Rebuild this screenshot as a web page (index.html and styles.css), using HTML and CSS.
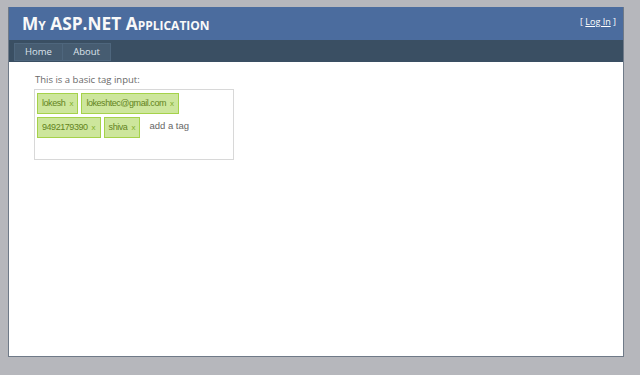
FILE: index.html
```html
<!DOCTYPE html>
<html>
<head>
    <title>My ASP.NET Application</title>
    <link rel="stylesheet" href="styles.css">
</head>
<body>
    <div class="page">
        <div class="header">
            <h1 class="title">My ASP.NET Application</h1>
            <div class="loginDisplay">[ <a href="#">Log In</a> ]</div>
        </div>
        <div class="menu-bar">
            <ul class="menu">
                <li><a href="#">Home</a></li>
                <li><a href="#">About</a></li>
            </ul>
        </div>
        <div class="main">
            <p class="label">This is a basic tag input:</p>
            <div class="tagsinput">
                <span class="tag">lokesh <a href="#">x</a></span>
                <span class="tag">lokeshtec@gmail.com <a href="#">x</a></span>
                <span class="tag">9492179390 <a href="#">x</a></span>
                <span class="tag">shiva <a href="#">x</a></span>
                <span class="add-tag">add a tag</span>
            </div>
        </div>
    </div>
</body>
</html>
```
FILE: styles.css
```css
body { margin: 0; background: #b6b7bc; font-family: "Open Sans", "DejaVu Sans", sans-serif; color: #696969; font-size: 10px; }
.page { margin: 7px 0 0 8px; width: 614px; height: 349px; background: #fff; border: 1px solid #6f7a88; border-top: none; }
.header { display: flex; justify-content: space-between; background: #4b6c9e; height: 33px; }
.title { margin: 0; padding-left: 13px; font-size: 17.3px; line-height: 34px; font-weight: 700; font-variant: small-caps; color: #f9f9f9; }
.loginDisplay { padding: 8px 7px 0 0; color: #fff; font-size: 9px; }
.loginDisplay a { color: #fff; }
.menu-bar { background: #3a4f63; height: 22px; }
.menu { list-style: none; margin: 0; padding: 3px 0 0 5px; display: flex; }
.menu a { display: block; width: 47px; height: 16px; line-height: 16px; text-align: center; background: #465c71; border: 1px solid #4e667d; border-left: none; color: #dde4ec; text-decoration: none; font-size: 9.5px; }
.menu li:first-child a { border-left: 1px solid #4e667d; }
.main { padding: 11px 0 0 25px; }
.label { margin: 0 0 3px 1px; font-size: 9.5px; }
.tagsinput { box-sizing: border-box; width: 200px; height: 71px; border: 1px solid #d8d8d8; padding: 3px 0 0 2px; display: flex; flex-wrap: wrap; align-content: flex-start; gap: 3px; font-family: "Liberation Sans", Arial, sans-serif; }
.tag { background: #cde69c; border: 1px solid #a5d24a; color: #638421; padding: 0 4px; height: 19px; line-height: 19px; font-size: 9px; letter-spacing: -0.45px; }
.tag a { color: #82ad2b; text-decoration: none; font-size: 8px; margin-left: 2px; letter-spacing: 0; }
.add-tag { color: #666; padding: 0 0 0 6px; line-height: 17px; font-size: 9.5px; }
```
